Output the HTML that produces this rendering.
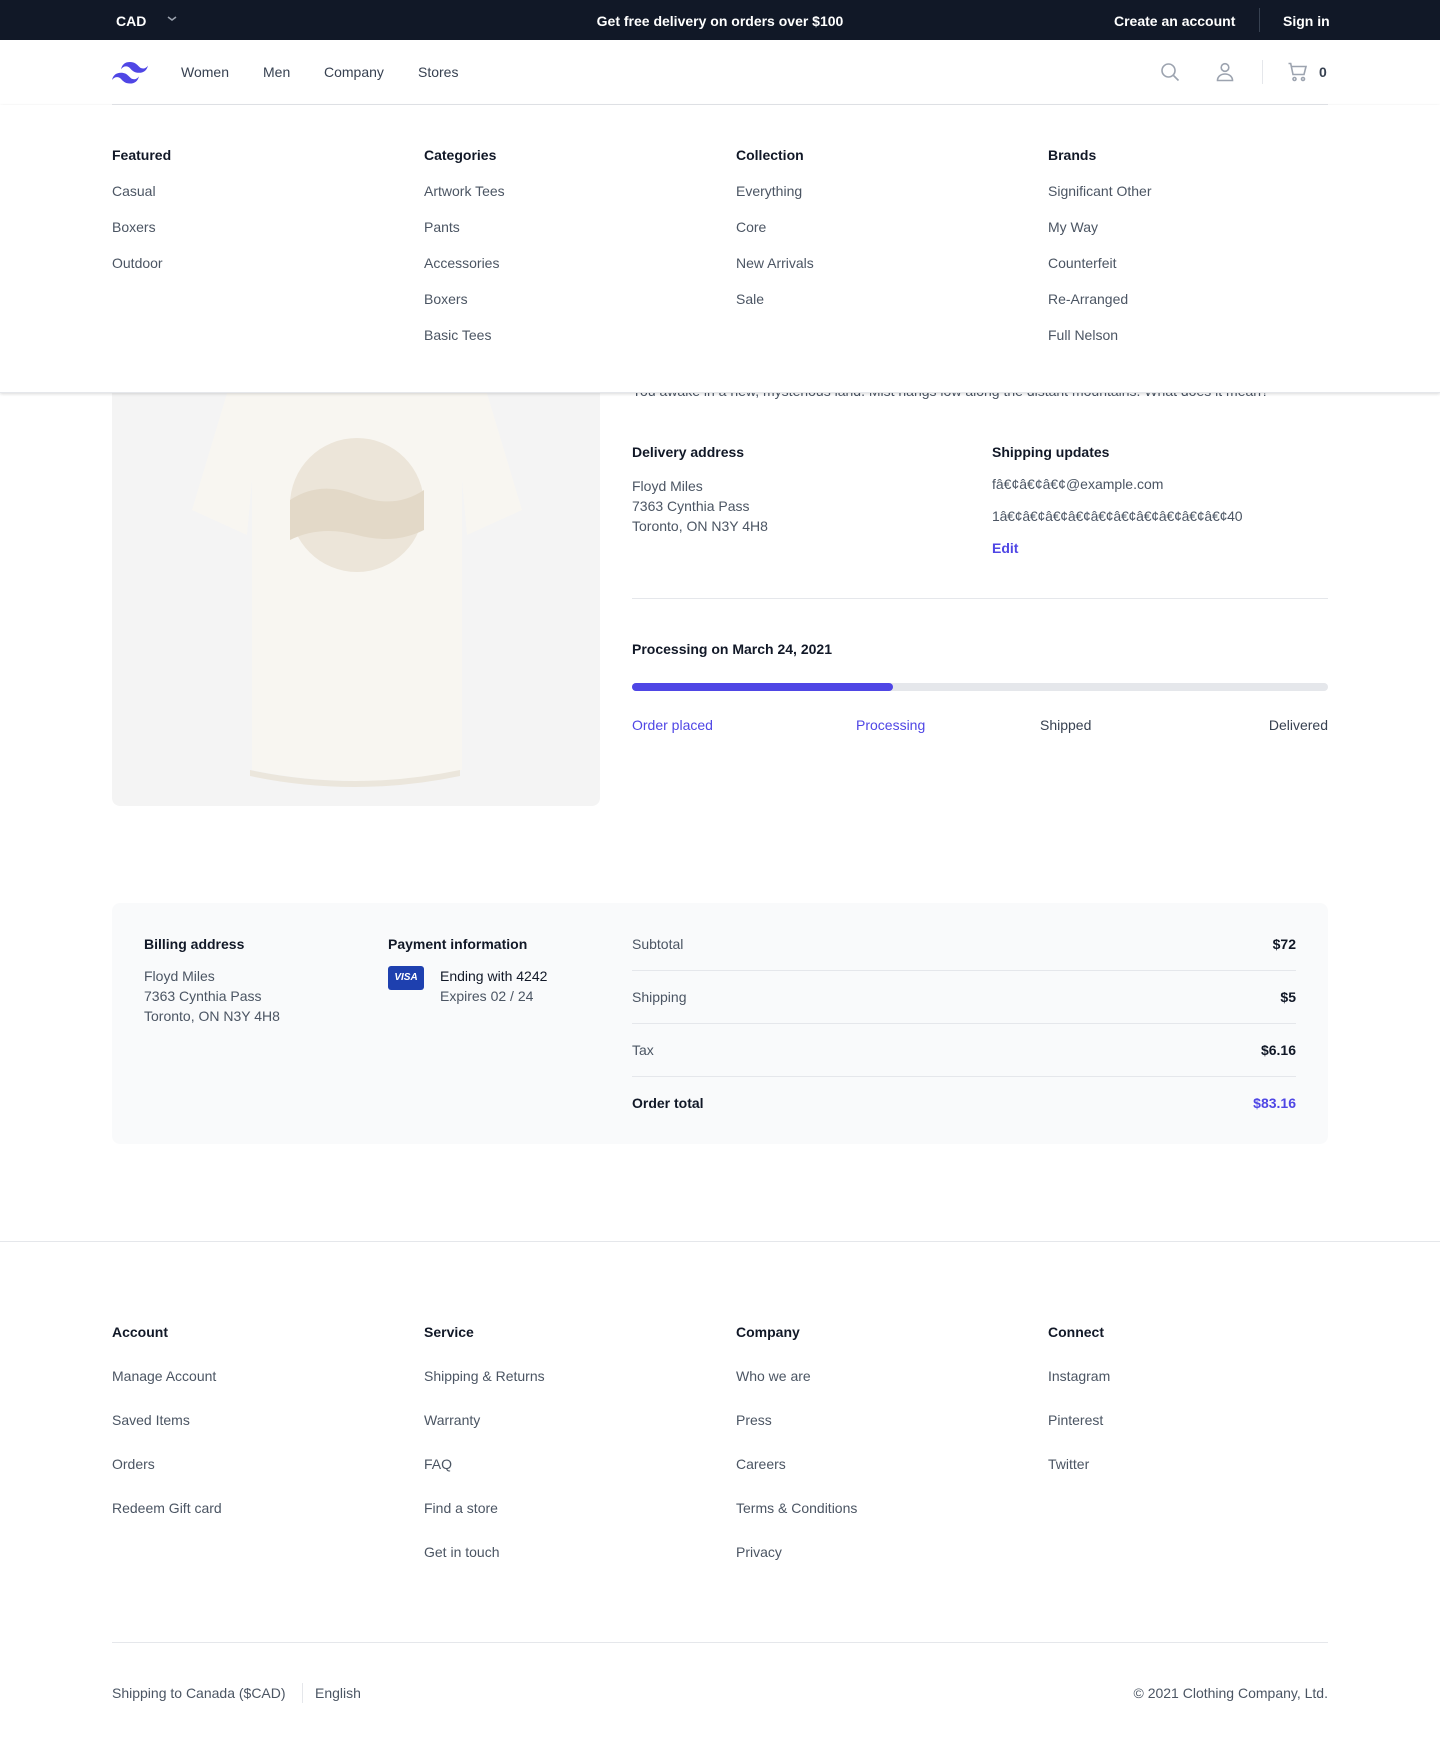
<!DOCTYPE html>
<html><head><meta charset="utf-8"><style>
*{box-sizing:border-box;margin:0;padding:0}
body{width:1440px;height:1743px;position:relative;font-family:"Liberation Sans",Arial,sans-serif;background:#fff;color:#111827;overflow:hidden}
.a{position:absolute;white-space:nowrap}
.top{position:absolute;left:0;top:0;width:1440px;height:40px;background:#111827;color:#fff;font-size:14px;font-weight:bold}
.g{color:#4b5563;font-size:14px}
.h{font-size:14px;font-weight:bold;color:#111827}
.p{color:#4f46e5}
</style></head><body>
<div class="top">
<div class="a" style="left:116px;top:13px">CAD</div>
<svg class="a" style="left:166px;top:14px" width="12" height="10" viewBox="0 0 12 10"><path d="M2 3l4 3 4-3" stroke="#9ca3af" stroke-width="1.5" fill="none"/></svg>
<div class="a" style="left:0;width:1440px;text-align:center;top:13px">Get free delivery on orders over $100</div>
<div class="a" style="left:1114px;top:13px">Create an account</div>
<div class="a" style="left:1259px;top:8px;width:1px;height:24px;background:#374151"></div>
<div class="a" style="left:1283px;top:13px">Sign in</div>
</div>
<svg class="a" style="left:112px;top:60px" width="36" height="24" viewBox="0 0 36 24"><path d="M18 2c-4.8 0-7.8 2.4-9 7.2 1.8-2.4 3.900-3.3 6.3-2.7 1.37.34 2.35 1.34 3.440 2.44C20.5 10.8 22.6 12.8 27 12.8c4.8 0 7.8-2.4 9-7.2-1.8 2.4-3.9 3.3-6.3 2.7-1.37-.34-2.35-1.34-3.44-2.44C24.5 4 22.4 2 18 2zM9 12.8c-4.8 0-7.8 2.4-9 7.2 1.8-2.4 3.9-3.3 6.3-2.7 1.37.34 2.35 1.34 3.44 2.44 1.76 1.8 3.86 3.8 8.26 3.8 4.8 0 7.8-2.4 9-7.2-1.8 2.4-3.9 3.3-6.3 2.7-1.37-.34-2.35-1.34-3.44-2.44C15.5 14.8 13.4 12.8 9 12.8z" fill="#4f46e5"/></svg>
<div class="a" style="left:181px;top:64px;font-size:14px;color:#374151">Women</div>
<div class="a" style="left:263px;top:64px;font-size:14px;color:#374151">Men</div>
<div class="a" style="left:324px;top:64px;font-size:14px;color:#374151">Company</div>
<div class="a" style="left:418px;top:64px;font-size:14px;color:#374151">Stores</div>
<svg class="a" style="left:1158px;top:60px" width="24" height="24" viewBox="0 0 24 24" fill="none" stroke="#9ca3af" stroke-width="1.6"><circle cx="10.5" cy="10.5" r="6.5"/><path d="M15.5 15.5l5 5"/></svg>
<svg class="a" style="left:1213px;top:60px" width="24" height="24" viewBox="0 0 24 24" fill="none" stroke="#9ca3af" stroke-width="1.6"><circle cx="12" cy="7.5" r="3.8"/><path d="M4.5 20.5c0-4 3.4-6.5 7.5-6.5s7.5 2.5 7.5 6.5z"/></svg>
<div class="a" style="left:1262px;top:60px;width:1px;height:24px;background:#e5e7eb"></div>
<svg class="a" style="left:1286px;top:60px" width="24" height="24" viewBox="0 0 24 24" fill="none" stroke="#9ca3af" stroke-width="1.6"><path d="M2.5 3.5h2.2l2.3 11h11l2-8H6"/><circle cx="8.5" cy="19" r="1.5"/><circle cx="17" cy="19" r="1.5"/></svg>
<div class="a" style="left:1319px;top:64px;font-size:14px;font-weight:bold;color:#374151">0</div>
<div class="a" style="left:112px;top:104px;width:1216px;height:1px;background:#e5e7eb"></div>
<div class="a" style="left:112px;top:300px;width:488px;height:506px;background:#f4f4f4;border-radius:8px;overflow:hidden">
<svg width="488" height="506" viewBox="0 0 488 506"><path d="M125 60L80 210l55 25 5-55v290q105 22 210 0V180l5 55 55-25-45-150z" fill="#f8f6f1"/><path d="M138 470q105 22 210 0v6q-105 22-210 0z" fill="#ebe6dc"/><circle cx="245" cy="205" r="67" fill="#ece5d9"/><path d="M178 200q30-20 67-5t67-5v40q-30 15-67 5t-67 5z" fill="#e3d9c8"/></svg>
</div>
<div class="a g" style="left:632px;top:383px">You awake in a new, mysterious land. Mist hangs low along the distant mountains. What does it mean?</div>
<div class="a h" style="left:632px;top:444px">Delivery address</div>
<div class="a g" style="left:632px;top:476px;line-height:20px">Floyd Miles<br>7363 Cynthia Pass<br>Toronto, ON N3Y 4H8</div>
<div class="a h" style="left:992px;top:444px">Shipping updates</div>
<div class="a g" style="left:992px;top:476px">fâ€¢â€¢â€¢@example.com</div>
<div class="a g" style="left:992px;top:508px;letter-spacing:-0.2px">1â€¢â€¢â€¢â€¢â€¢â€¢â€¢â€¢â€¢â€¢40</div>
<div class="a p" style="left:992px;top:540px;font-size:14px;font-weight:bold">Edit</div>
<div class="a" style="left:632px;top:598px;width:696px;height:1px;background:#e5e7eb"></div>
<div class="a h" style="left:632px;top:641px">Processing on March 24, 2021</div>
<div class="a" style="left:632px;top:683px;width:696px;height:8px;border-radius:4px;background:#e5e7eb"><div style="width:261px;height:8px;border-radius:4px;background:#4f46e5"></div></div>
<div class="a p" style="left:632px;top:717px;font-size:14px">Order placed</div>
<div class="a p" style="left:856px;top:717px;font-size:14px">Processing</div>
<div class="a" style="left:1040px;top:717px;font-size:14px;color:#374151">Shipped</div>
<div class="a" style="right:112px;top:717px;font-size:14px;color:#374151">Delivered</div>
<div class="a" style="left:0;top:105px;width:1440px;height:288px;background:#fff;box-shadow:0 1px 3px rgba(0,0,0,.15);border-bottom:1px solid #e5e7eb"></div>
<div class="a h" style="left:112px;top:147px;line-height:16px">Featured</div>
<div class="a g" style="left:112px;top:173px;line-height:36px">Casual<br>Boxers<br>Outdoor</div>
<div class="a h" style="left:424px;top:147px">Categories</div>
<div class="a g" style="left:424px;top:173px;line-height:36px">Artwork Tees<br>Pants<br>Accessories<br>Boxers<br>Basic Tees</div>
<div class="a h" style="left:736px;top:147px">Collection</div>
<div class="a g" style="left:736px;top:173px;line-height:36px">Everything<br>Core<br>New Arrivals<br>Sale</div>
<div class="a h" style="left:1048px;top:147px">Brands</div>
<div class="a g" style="left:1048px;top:173px;line-height:36px">Significant Other<br>My Way<br>Counterfeit<br>Re-Arranged<br>Full Nelson</div>
<div class="a" style="left:112px;top:903px;width:1216px;height:241px;background:#f9fafb;border-radius:8px"></div>
<div class="a h" style="left:144px;top:936px">Billing address</div>
<div class="a g" style="left:144px;top:966px;line-height:20px">Floyd Miles<br>7363 Cynthia Pass<br>Toronto, ON N3Y 4H8</div>
<div class="a h" style="left:388px;top:936px">Payment information</div>
<div class="a" style="left:388px;top:966px;width:36px;height:24px;border-radius:3px;background:#1e40af;color:#fff;font-size:10px;font-weight:bold;font-style:italic;text-align:center;line-height:24px">VISA</div>
<div class="a" style="left:440px;top:968px;font-size:14px;color:#111827">Ending with 4242</div>
<div class="a g" style="left:440px;top:988px">Expires 02 / 24</div>
<div class="a g" style="left:632px;top:936px">Subtotal</div><div class="a h" style="right:144px;top:936px">$72</div>
<div class="a" style="left:632px;top:970px;width:664px;height:1px;background:#e5e7eb"></div>
<div class="a g" style="left:632px;top:989px">Shipping</div><div class="a h" style="right:144px;top:989px">$5</div>
<div class="a" style="left:632px;top:1023px;width:664px;height:1px;background:#e5e7eb"></div>
<div class="a g" style="left:632px;top:1042px">Tax</div><div class="a h" style="right:144px;top:1042px">$6.16</div>
<div class="a" style="left:632px;top:1076px;width:664px;height:1px;background:#e5e7eb"></div>
<div class="a h" style="left:632px;top:1095px">Order total</div><div class="a p" style="right:144px;top:1095px;font-size:14px;font-weight:bold">$83.16</div>
<div class="a" style="left:0;top:1241px;width:1440px;height:1px;background:#e5e7eb"></div>
<div class="a h" style="left:112px;top:1324px">Account</div>
<div class="a g" style="left:112px;top:1354px;line-height:44px">Manage Account<br>Saved Items<br>Orders<br>Redeem Gift card</div>
<div class="a h" style="left:424px;top:1324px">Service</div>
<div class="a g" style="left:424px;top:1354px;line-height:44px">Shipping &amp; Returns<br>Warranty<br>FAQ<br>Find a store<br>Get in touch</div>
<div class="a h" style="left:736px;top:1324px">Company</div>
<div class="a g" style="left:736px;top:1354px;line-height:44px">Who we are<br>Press<br>Careers<br>Terms &amp; Conditions<br>Privacy</div>
<div class="a h" style="left:1048px;top:1324px">Connect</div>
<div class="a g" style="left:1048px;top:1354px;line-height:44px">Instagram<br>Pinterest<br>Twitter</div>
<div class="a" style="left:112px;top:1642px;width:1216px;height:1px;background:#e5e7eb"></div>
<div class="a g" style="left:112px;top:1685px">Shipping to Canada ($CAD)</div>
<div class="a" style="left:302px;top:1683px;width:1px;height:20px;background:#e5e7eb"></div>
<div class="a g" style="left:315px;top:1685px">English</div>
<div class="a g" style="right:112px;top:1685px">© 2021 Clothing Company, Ltd.</div>
</body></html>
